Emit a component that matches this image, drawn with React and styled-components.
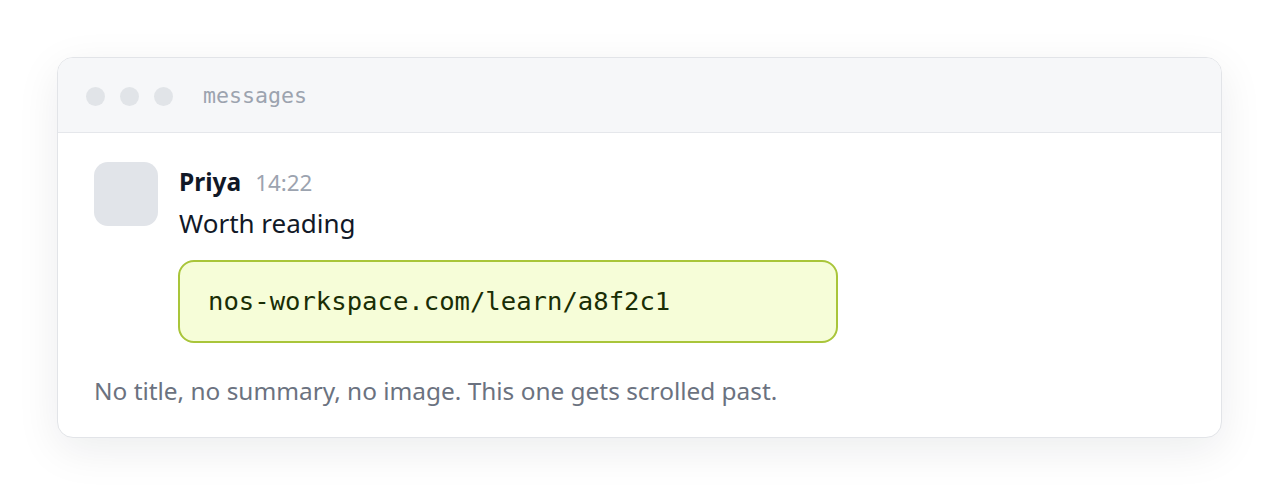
import React from "react";
import styled, { createGlobalStyle } from "styled-components";

const Global = createGlobalStyle`
  html, body { margin: 0; padding: 0; background: #ffffff; }
  body { font-family: "Noto Sans", "Open Sans", sans-serif; }
  * { box-sizing: border-box; }
`;

const Page = styled.div`
  padding: 57px 58px 57px 57px;
`;

const Card = styled.div`
  background: #ffffff;
  border: 1px solid #e2e4e8;
  border-radius: 16px;
  overflow: hidden;
  box-shadow: 0 12px 44px rgba(17, 24, 39, 0.08);
`;

const Header = styled.div`
  height: 75px;
  display: flex;
  align-items: center;
  padding: 2px 28px 0;
  background: #f6f7f9;
  border-bottom: 1px solid #e5e7eb;
`;

const Dots = styled.div`
  display: flex;
  gap: 15px;
`;

const Dot = styled.span`
  width: 19px;
  height: 19px;
  border-radius: 50%;
  background: #e1e4e8;
`;

const Title = styled.span`
  margin-left: 30px;
  font-family: "DejaVu Sans Mono", "Liberation Mono", monospace;
  font-size: 21.6px;
  color: #9ca3af;
  line-height: 1;
`;

const Body = styled.div`
  padding: 29px 36px 28px 36px;
`;

const Message = styled.div`
  display: flex;
  gap: 21px;
`;

const Avatar = styled.div`
  flex: none;
  width: 64px;
  height: 64px;
  border-radius: 14px;
  background: #e1e4e9;
`;

const Content = styled.div`
  display: flex;
  flex-direction: column;
  align-items: flex-start;
`;

const NameRow = styled.div`
  display: flex;
  align-items: baseline;
  gap: 14px;
  height: 40px;
  line-height: 40px;
`;

const Name = styled.span`
  font-weight: 700;
  font-size: 24.5px;
  color: #111827;
`;

const Time = styled.span`
  font-size: 22.4px;
  color: #9ca3af;
`;

const Text = styled.div`
  margin-top: 2px;
  font-size: 26px;
  line-height: 1.5;
  color: #111827;
`;

const LinkBox = styled.div`
  margin-top: 17px;
  margin-left: -1px;
  width: 660px;
  padding: 21.5px 28px;
  border: 2px solid #a9c53a;
  border-radius: 16px;
  background: #f6fdd8;
  font-family: "DejaVu Sans Mono", "Liberation Mono", monospace;
  font-size: 25.6px;
  line-height: 1.4;
  color: #1a2e05;
`;

const Note = styled.p`
  margin: 30px 0 0;
  font-size: 24.4px;
  line-height: 36px;
  color: #6b7280;
`;

export default function App() {
  return (
    <>
      <Global />
      <Page>
        <Card>
          <Header>
            <Dots>
              <Dot />
              <Dot />
              <Dot />
            </Dots>
            <Title>messages</Title>
          </Header>
          <Body>
            <Message>
              <Avatar />
              <Content>
                <NameRow>
                  <Name>Priya</Name>
                  <Time>14:22</Time>
                </NameRow>
                <Text>Worth reading</Text>
                <LinkBox>nos-workspace.com/learn/a8f2c1</LinkBox>
              </Content>
            </Message>
            <Note>No title, no summary, no image. This one gets scrolled past.</Note>
          </Body>
        </Card>
      </Page>
    </>
  );
}
